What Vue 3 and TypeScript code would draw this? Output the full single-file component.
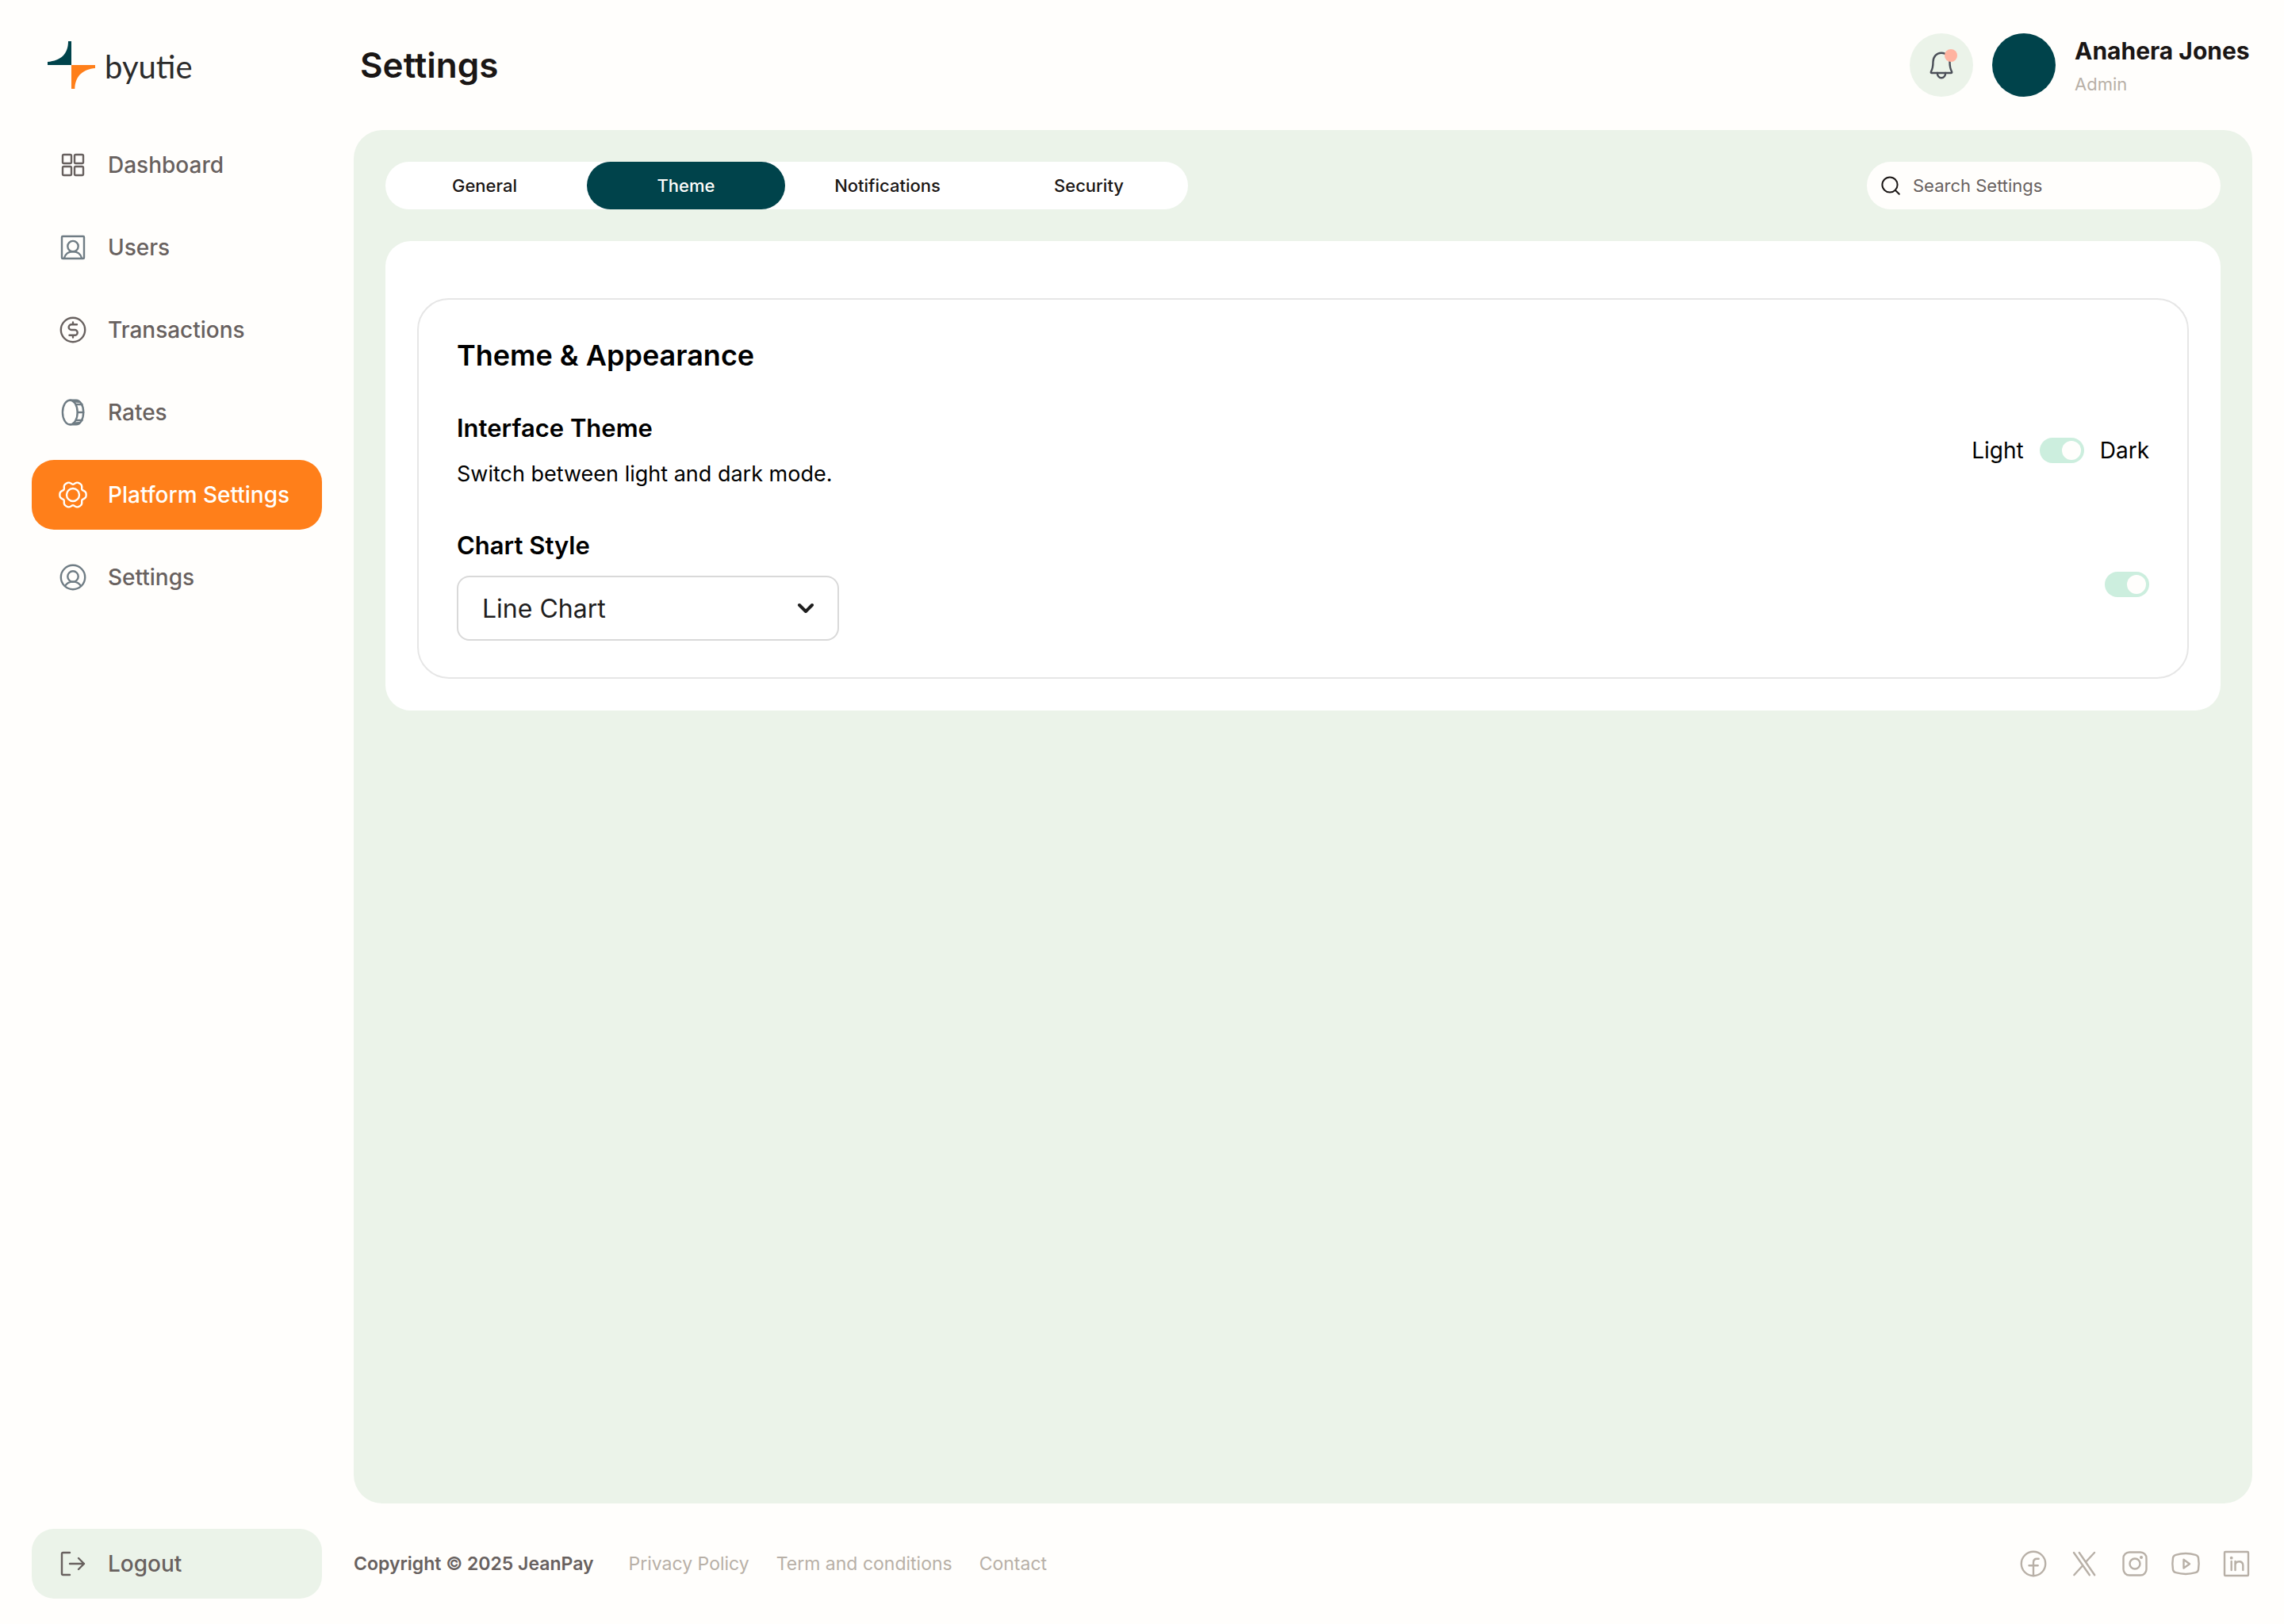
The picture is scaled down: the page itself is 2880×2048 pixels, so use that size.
<script setup lang="ts">
import { ref } from 'vue'

interface NavItem {
  label: string
  icon: string
  slate?: boolean
}

const navItems: NavItem[] = [
  { label: 'Dashboard', icon: 'grid' },
  { label: 'Users', icon: 'portrait', slate: true },
  { label: 'Transactions', icon: 'dollar' },
  { label: 'Rates', icon: 'coin', slate: true },
  { label: 'Platform Settings', icon: 'gear' },
  { label: 'Settings', icon: 'profile', slate: true },
]
const activeNav = ref('Platform Settings')

const tabs = ['General', 'Theme', 'Notifications', 'Security']
const activeTab = ref('Theme')

const footerLinks = ['Privacy Policy', 'Term and conditions', 'Contact']
const socials = ['Facebook', 'X', 'Instagram', 'YouTube', 'LinkedIn']

const search = ref('')
const chartStyle = ref('Line Chart')
const darkMode = ref(true)
const chartEnabled = ref(true)

// Six-lobed gear outline, traced in polar coordinates around the icon's centre.
function gearOutline(): string {
  const points: string[] = []
  for (let deg = 0; deg < 360; deg += 3) {
    const a = (deg * Math.PI) / 180
    const r = 15.3 + 1.7 * Math.cos(6 * a) - 0.4 * Math.cos(12 * a)
    points.push(`${(20 + r * Math.cos(a)).toFixed(2)} ${(20 + r * Math.sin(a)).toFixed(2)}`)
  }
  return `M${points.join('L')}Z`
}
const gearPath = gearOutline()
</script>

<template>
  <div class="app">
    <aside class="sidebar">
      <a class="brand" href="#">
        <svg class="brand-mark" viewBox="0 0 60 60" aria-hidden="true">
          <path d="M26 0H30V30H0V26C17 24.500 26 16 26 0Z" fill="#00434b" />
          <path d="M30 30H60V34C45 35.500 35 43 34.300 60H30Z" fill="#ff7f1a" />
        </svg>
        <span class="brand-name">byutie</span>
      </a>

      <nav class="nav" aria-label="Main">
        <a
          v-for="item in navItems"
          :key="item.label"
          href="#"
          class="nav-item"
          :class="{ active: item.label === activeNav }"
          @click.prevent="activeNav = item.label"
        >
          <svg class="icon" :class="{ slate: item.slate }" viewBox="0 0 40 40" aria-hidden="true">
            <g v-if="item.icon === 'grid'">
              <rect x="7" y="7" width="11" height="11" rx="1.500" />
              <rect x="22" y="7" width="11" height="11" rx="1.500" />
              <rect x="7" y="22" width="11" height="11" rx="1.500" />
              <rect x="22" y="22" width="11" height="11" rx="1.500" />
            </g>
            <g v-else-if="item.icon === 'portrait'">
              <rect x="6" y="6" width="28" height="28" rx="1" />
              <circle cx="20" cy="18.600" r="6.700" />
              <path d="M9 33.500C11.500 22.500 28.500 22.500 31 33.500" />
            </g>
            <g v-else-if="item.icon === 'dollar'">
              <circle cx="20" cy="20" r="15.200" />
              <path d="M25 13.300H18a3.350 3.350 0 0 0 0 6.700H22.300a3.400 3.400 0 0 1 0 6.800H15.500M20 10.500V13.300M20 26.800V29.500" />
            </g>
            <g v-else-if="item.icon === 'coin'">
              <ellipse cx="16.300" cy="20" rx="9.400" ry="15.300" />
              <path d="M16.300 4.700H24C29 4.700 33.200 11 33.200 20S29 35.300 24 35.300H16.300" />
              <path d="M25.800 20H33.200M24.500 10H31.500M24.500 30H31.500M20.500 6.200L27.500 6.800M20.500 33.800L27.500 33.200" />
            </g>
            <g v-else-if="item.icon === 'gear'">
              <path :d="gearPath" />
              <circle cx="20" cy="20" r="8" />
            </g>
            <g v-else>
              <circle cx="20" cy="20" r="15.200" />
              <circle cx="20" cy="19" r="6.700" />
              <path d="M10 31C14 23.800 26 23.800 30 31" />
            </g>
          </svg>
          <span>{{ item.label }}</span>
        </a>
      </nav>

      <button type="button" class="nav-item logout">
        <svg class="icon" viewBox="0 0 40 40" aria-hidden="true">
          <path d="M16 6H7.500Q6 6 6 7.500V32.500Q6 34 7.500 34H16" />
          <path d="M16 20H34M27 13L34 20L27 27" />
        </svg>
        <span>Logout</span>
      </button>
    </aside>

    <div class="content">
      <header class="header">
        <h1>Settings</h1>
        <div class="account">
          <button type="button" class="bell" aria-label="Alerts">
            <svg viewBox="0 0 40 40" aria-hidden="true">
              <path
                d="M20 4.700C13.500 4.700 9.500 10 9.500 16C9.500 21.500 9 24.500 7 28.300Q6.200 30 8 30H32Q33.800 30 33 28.300C31 24.500 30.500 21.500 30.500 16C30.500 10 26.500 4.700 20 4.700Z"
              />
              <path d="M14.800 30A5.200 6.300 0 0 0 25.200 30" />
              <circle class="dot" cx="32" cy="8" r="8" />
            </svg>
          </button>
          <span class="avatar"></span>
          <div class="who">
            <span class="who-name">Anahera Jones</span>
            <span class="who-role">Admin</span>
          </div>
        </div>
      </header>

      <main class="panel">
        <div class="toolbar">
          <div class="tabs" role="tablist">
            <button
              v-for="tab in tabs"
              :key="tab"
              type="button"
              role="tab"
              class="tab"
              :class="{ active: tab === activeTab }"
              :aria-selected="tab === activeTab"
              @click="activeTab = tab"
            >
              {{ tab }}
            </button>
          </div>
          <label class="search">
            <svg viewBox="0 0 32 32" aria-hidden="true">
              <circle cx="13" cy="15" r="9.600" />
              <path d="M20 22L24.800 26.800" />
            </svg>
            <input v-model="search" type="text" placeholder="Search Settings" aria-label="Search Settings" />
          </label>
        </div>

        <section class="card">
          <div class="group">
            <h2>Theme &amp; Appearance</h2>

            <div class="row">
              <div class="row-text">
                <h3>Interface Theme</h3>
                <p>Switch between light and dark mode.</p>
              </div>
              <label class="mode">
                <span>Light</span>
                <input v-model="darkMode" type="checkbox" class="toggle" />
                <span>Dark</span>
              </label>
            </div>

            <div class="row">
              <div class="row-text">
                <h3><label for="chart-style">Chart Style</label></h3>
                <div class="select">
                  <select id="chart-style" v-model="chartStyle">
                    <option>Line Chart</option>
                    <option>Bar Chart</option>
                  </select>
                  <svg viewBox="0 0 32 32" aria-hidden="true"><path d="M8 12L16 20L24 12" /></svg>
                </div>
              </div>
              <input v-model="chartEnabled" type="checkbox" class="toggle" aria-label="Chart style enabled" />
            </div>
          </div>
        </section>
      </main>

      <footer class="footer">
        <strong>Copyright © 2025 JeanPay</strong>
        <nav class="links" aria-label="Legal">
          <a v-for="link in footerLinks" :key="link" href="#">{{ link }}</a>
        </nav>
        <div class="socials">
          <a v-for="name in socials" :key="name" href="#" :aria-label="name">
            <svg viewBox="0 0 40 40" aria-hidden="true">
              <g v-if="name === 'Facebook'">
                <circle cx="20" cy="20" r="15.200" />
                <path d="M20 35V18.500Q20 13.800 24.500 13.800H26.700M14.500 22.300H25.700" />
              </g>
              <g v-else-if="name === 'X'">
                <path d="M7 6L26.800 34.200M13.800 6L33.200 34.200M33 6L22.300 17.500M7.300 34.200L18.200 22.300" />
              </g>
              <g v-else-if="name === 'Instagram'">
                <rect x="5.500" y="5.500" width="29" height="29" rx="7.500" />
                <circle cx="20" cy="20" r="6.500" />
                <circle class="solid" cx="28" cy="12" r="2" />
              </g>
              <g v-else-if="name === 'YouTube'">
                <path
                  d="M7.500 8.800C15 6.700 25 6.700 32.500 8.800Q35.500 9.700 36 12.500Q37.300 20 36 27.500Q35.500 30.300 32.500 31.200C25 33.300 15 33.300 7.500 31.200Q4.500 30.300 4 27.500Q2.700 20 4 12.500Q4.500 9.700 7.500 8.800Z"
                />
                <path d="M17.500 14.800L25 20.200L17.500 25.500Z" />
              </g>
              <g v-else>
                <rect x="5" y="5" width="30" height="30" rx="1" />
                <circle class="solid" cx="13.700" cy="12.700" r="1.900" />
                <path d="M13.700 17V28M18.500 28V17M18.500 22Q18.500 17.200 23.300 17.200T28.300 22V28" />
              </g>
            </svg>
          </a>
        </div>
      </footer>
    </div>
  </div>
</template>

<style>
body {
  margin: 0;
  background: #fffefc;
}
</style>

<style scoped>
.app {
  display: flex;
  min-height: 100vh;
  box-sizing: border-box;
  background: #fffefc;
  color: #1a1615;
  font-family: Inter, 'Liberation Sans', sans-serif;
  font-size: 28px;
}

h1,
h2,
h3,
p {
  margin: 0;
}

button,
input,
select {
  font: inherit;
  color: inherit;
}

a {
  color: inherit;
  text-decoration: none;
}

svg {
  display: block;
  flex: none;
  fill: none;
  stroke: currentColor;
  stroke-width: 2.4;
  stroke-linecap: round;
  stroke-linejoin: round;
}

/* Sidebar */
.sidebar {
  display: flex;
  flex: none;
  flex-direction: column;
  width: 366px;
  padding: 0 40px 32px;
}

.brand {
  display: flex;
  align-items: center;
  gap: 12px;
  height: 164px;
  padding-left: 20px;
}

.brand-mark {
  width: 60px;
  height: 60px;
  stroke: none;
}

.brand-name {
  padding-top: 4px;
  font-family: Lato, sans-serif;
  font-size: 40px;
  line-height: 48px;
  color: #2b2b2b;
}

.nav {
  display: flex;
  flex-direction: column;
  gap: 16px;
}

.nav-item {
  display: flex;
  align-items: center;
  gap: 24px;
  height: 88px;
  padding: 0 32px;
  border: 0;
  border-radius: 28px;
  font-weight: 500;
  white-space: nowrap;
  color: #68615f;
}

.nav-item.active {
  background: #ff7f1a;
  color: #fffefc;
}

.icon {
  width: 40px;
  height: 40px;
}

.icon.slate {
  color: #6f7c84;
}

.logout {
  margin-top: auto;
  background: #ebf3e9;
  text-align: left;
}

/* Header */
.content {
  display: flex;
  flex: 1;
  flex-direction: column;
  min-width: 0;
  padding-right: 40px;
}

.header {
  display: flex;
  align-items: center;
  justify-content: space-between;
  height: 164px;
}

h1 {
  padding-left: 8px;
  font-size: 44px;
  font-weight: 600;
}

.account {
  display: flex;
  align-items: center;
  gap: 24px;
}

.bell {
  display: grid;
  place-items: center;
  width: 80px;
  height: 80px;
  padding: 0;
  border: 0;
  border-radius: 50%;
  background: #ebf3e9;
  color: #4b4f58;
}

.bell svg {
  width: 40px;
  height: 40px;
}

.dot {
  fill: #ffb3a0;
  stroke: none;
}

.avatar {
  width: 80px;
  height: 80px;
  border-radius: 50%;
  background: #00434b;
}

.who {
  display: flex;
  flex-direction: column;
  gap: 4px;
  min-width: 224px;
  padding-top: 4px;
}

.who-name {
  font-size: 30px;
  font-weight: 700;
  line-height: 40px;
}

.who-role {
  font-size: 22px;
  line-height: 36px;
  color: #b8b0a7;
}

/* Main panel */
.panel {
  flex: 1;
  padding: 40px;
  border-radius: 36px;
  background: #ebf3e9;
}

.toolbar {
  display: flex;
  justify-content: space-between;
  margin-bottom: 40px;
}

.tabs {
  display: flex;
  gap: 4px;
  height: 60px;
  border-radius: 30px;
  background: #fff;
}

.tab {
  width: 250px;
  padding: 0;
  border: 0;
  border-radius: 30px;
  background: none;
  font-size: 22px;
  font-weight: 500;
}

.tab.active {
  background: #00434b;
  color: #fffefc;
}

.search {
  display: flex;
  align-items: center;
  gap: 10px;
  box-sizing: border-box;
  width: 446px;
  height: 60px;
  padding: 0 16px;
  border-radius: 30px;
  background: #fffefc;
}

.search svg {
  width: 32px;
  height: 32px;
  stroke-width: 2;
}

.search input {
  flex: 1;
  min-width: 0;
  padding: 0;
  border: 0;
  outline: 0;
  background: none;
  font-size: 22px;
}

.search input::placeholder {
  color: #68615f;
  opacity: 1;
}

.card {
  padding: 72px 40px 40px;
  border-radius: 32px;
  background: #fff;
}

.group {
  display: flex;
  flex-direction: column;
  gap: 48px;
  padding: 48px 48px 46px;
  border: 2px solid #e6e6e6;
  border-radius: 40px;
  color: #000;
}

h2 {
  font-size: 36px;
  font-weight: 600;
  line-height: 44px;
}

.row {
  display: flex;
  align-items: center;
  justify-content: space-between;
}

.row-text {
  display: flex;
  flex-direction: column;
  gap: 16px;
}

h3 {
  font-size: 31px;
  font-weight: 600;
  line-height: 44px;
}

p {
  font-size: 27px;
  line-height: 40px;
}

.mode {
  display: flex;
  align-items: center;
  gap: 20px;
}

.toggle {
  display: flex;
  justify-content: flex-start;
  box-sizing: border-box;
  width: 56px;
  height: 32px;
  margin: 0;
  padding: 4px;
  border-radius: 16px;
  background: #dcdcdc;
  appearance: none;
}

.toggle::before {
  width: 24px;
  height: 24px;
  border-radius: 50%;
  background: #fffefc;
  content: '';
}

.toggle:checked {
  justify-content: flex-end;
  background: #cceede;
}

.select {
  display: grid;
  align-items: center;
}

.select > * {
  grid-area: 1 / 1;
}

.select select {
  width: 482px;
  height: 82px;
  padding: 0 30px;
  border: 2px solid #d9d9d9;
  border-radius: 16px;
  background: #fff;
  color: #1e1e1e;
  font-size: 32px;
  appearance: none;
}

.select svg {
  justify-self: end;
  width: 32px;
  height: 32px;
  margin-right: 26px;
  color: #1e1e1e;
  stroke-width: 4;
  pointer-events: none;
}

/* Footer */
.footer {
  display: flex;
  align-items: center;
  height: 152px;
  font-size: 23px;
  color: #b8b0a7;
}

.footer strong {
  font-weight: 600;
  color: #68615f;
}

.links {
  display: flex;
  gap: 34px;
  margin-left: 44px;
}

.socials {
  display: flex;
  gap: 24px;
  margin-left: auto;
}

.socials svg {
  width: 40px;
  height: 40px;
}

.solid {
  fill: currentColor;
  stroke: none;
}
</style>
